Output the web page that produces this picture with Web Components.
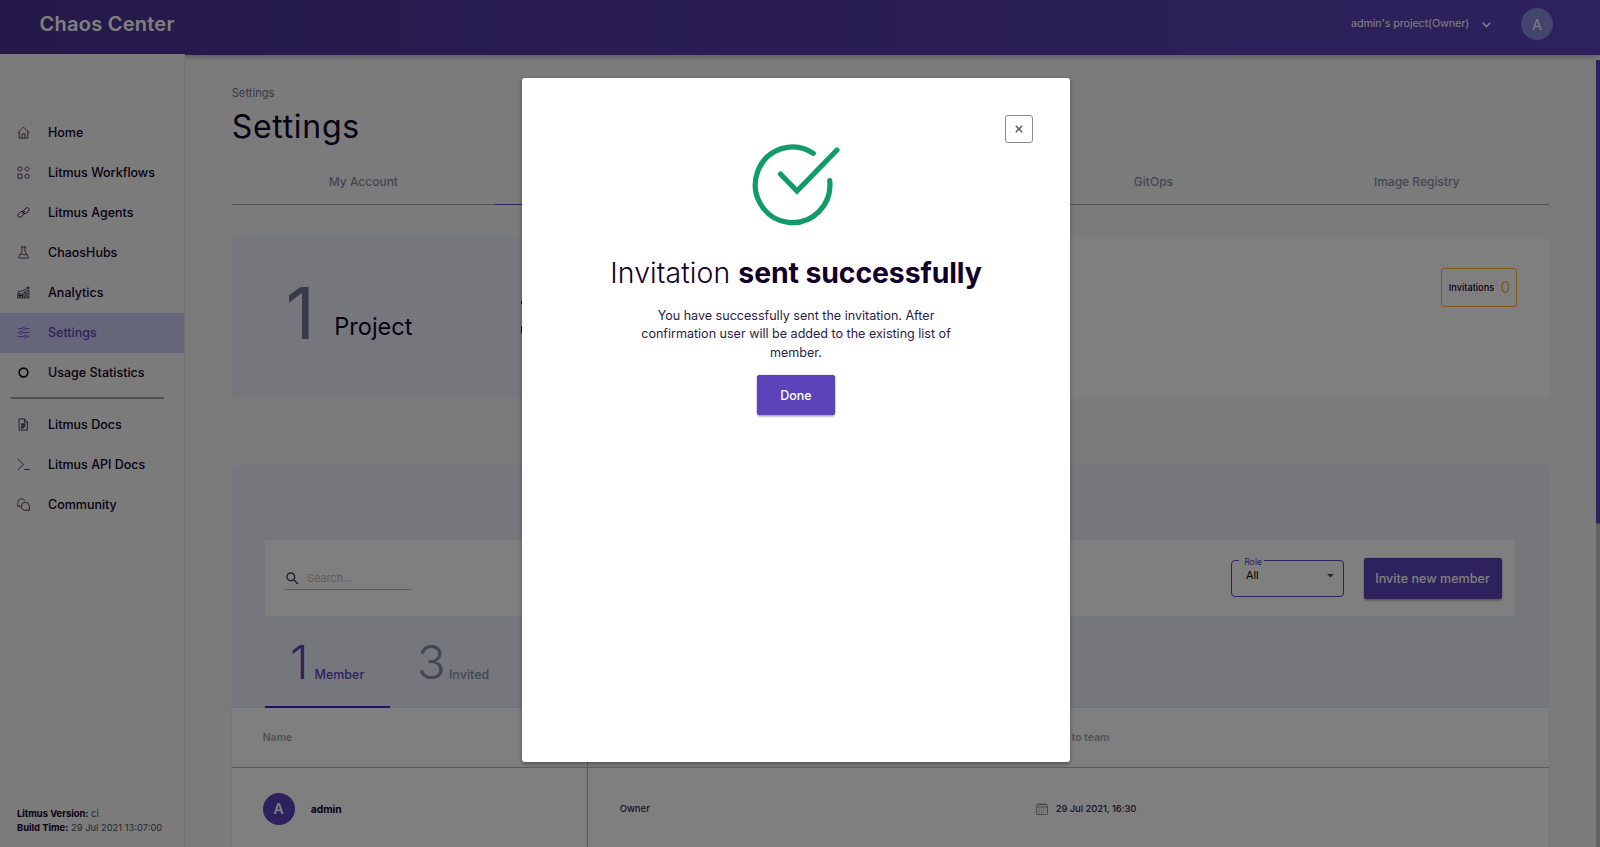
<!DOCTYPE html>
<html lang="en">
<head>
<meta charset="utf-8">
<title>Chaos Center</title>
<style>
html,body{margin:0;height:100%;overflow:hidden;background:#f7f7f7;font-family:Inter,"Liberation Sans",sans-serif;color:#110029}
</style>
</head>
<body>
<chaos-app></chaos-app>
<script>
const define = (name, html) => {
  const t = document.createElement('template');
  t.innerHTML = html;
  customElements.define(name, class extends HTMLElement {
    constructor() {
      super();
      this.attachShadow({ mode: 'open' }).append(t.content.cloneNode(true));
    }
  });
};

const icons = {
  home: '<path d="M.8 7.4 7 1.2 13.2 7.4M2.4 6v7.1h9.2V6M5.4 13V8.6h3.2V13"/>',
  workflows: '<circle cx="3.1" cy="3.1" r="2.3"/><path d="M10.9.4 13.5 3.1 10.9 5.8 8.2 3.1zM.9 8.7h4.4v4.5H.9z"/><circle cx="10.9" cy="11" r="2.3"/>',
  agents: '<g stroke-width=".9"><rect x="6.2" y="2.9" width="7.4" height="4.2" rx="2.1" transform="rotate(-42 9.9 5)"/><rect x=".4" y="6.9" width="7.4" height="4.2" rx="2.1" transform="rotate(-42 4.1 9)"/><path d="M5.3 8.2 8.7 5.6"/></g>',
  hubs: '<path d="M4 1h6M5.4 1v5L1.7 11.6q-.5 1.4.8 1.4h9q1.3 0 .8-1.4L8.6 6V1M3.6 9.2q1.7-1 3.4 0t3.4 0"/>',
  analytics: '<path d="M.8 13V7.6h1.9V13zM4.1 13V8.6H6V13zM7.5 13V6.4h1.9V13zM10.9 13V4.4h1.9V13zM.8 5.4 3.6 6 6.5 5 12.6 1.8M.8 10.2H6M10 1.4h2.9v1.8"/>',
  settings: '<path d="M.4 2.8h5.1M8.5 2.8h5.1M.4 7h2.3M5.7 7h7.9M.4 11.2h7.3M10.7 11.2h2.9"/><circle cx="7" cy="2.8" r="1.5"/><circle cx="4.2" cy="7" r="1.5"/><circle cx="9.2" cy="11.2" r="1.5"/>',
  usage: '<circle cx="7" cy="7" r="4.7" stroke="#000" stroke-width="1.7"/>',
  docs: '<path d="M2.2 1h6l3 3.2V13h-9zM8 1v3.4h3.2"/><path d="M4.2 6.7h5M4.2 8.7h5M4.2 10.6h3" stroke-width="1.3"/>',
  api: '<path d="M.6 1 7 7 .6 13M7.8 12.4h6"/>',
  community: '<path d="M4.8 8.9H.8V5A4.2 4.2 0 0 1 8.7 3"/><path d="M13.3 13.2H8.9a4.3 4.3 0 1 1 4.4-4.3z"/>'
};

define('app-avatar', `<style>
:host{display:flex;align-items:center;justify-content:center;width:32px;height:32px;border-radius:50%;background:var(--bg,#5b44ba);color:#fff;flex:none;font-size:14px;font-weight:var(--w,400)}
</style><slot></slot>`);

define('app-header', `<style>
:host{display:flex;align-items:center;height:55px;box-sizing:border-box;padding:0 47px 7px 39.5px;background:linear-gradient(90deg,#4a3394,#5b44ba);color:#fff;box-shadow:0 2px 5px rgba(0,0,0,.25);position:relative;z-index:1}
b{font-weight:600;font-size:20px;letter-spacing:.25px;flex:1}
span{font-size:10.8px;color:#fff;letter-spacing:-.11px;margin-top:-1.5px}
svg{margin:1px 30px 0 13px}
app-avatar{--bg:#858cdd}
</style><b>Chaos Center</b><span>admin's project(Owner)</span>
<svg width="9" height="6" viewBox="0 0 9 6" fill="none" stroke="#fff" stroke-width="1.6"><path d="M.8.8 4.5 4.5 8.2.8"/></svg><app-avatar>A</app-avatar>`);

customElements.define('nav-item', class extends HTMLElement {
  connectedCallback() {
    this.attachShadow({ mode: 'open' }).innerHTML = `<style>
:host{display:flex;align-items:center;height:40px;padding-left:16.5px;font-size:12.5px;font-weight:500}
:host([active]){background:#cacdf5;color:#5b44ba}
svg{margin-right:18.5px;color:#1c0732}
:host([active]) svg{color:#5b44ba}
</style><svg width="13" height="13" viewBox="0 0 14 14" fill="none" stroke="currentColor" stroke-width=".8">${icons[this.getAttribute('icon')]}</svg><slot></slot>`;
  }
});

define('app-sidebar', `<style>
:host{display:flex;flex-direction:column;width:184.5px;box-sizing:border-box;border-right:1px solid #e6e6e6;margin-top:-1px;padding-top:58.6px;background:#f7f7f7;position:relative;z-index:2}
hr{width:153px;margin:5px 0 5.6px 11px;height:1.6px;border:0;background:#a2a2a2}
nav-item[icon=usage]{height:39.4px}
footer{margin:auto 0 12.5px 17px;font-size:9.4px;line-height:14px;white-space:nowrap;color:#524b66}
footer b{color:#110029}
</style>
<nav-item icon="home">Home</nav-item><nav-item icon="workflows">Litmus Workflows</nav-item><nav-item icon="agents">Litmus Agents</nav-item><nav-item icon="hubs">ChaosHubs</nav-item><nav-item icon="analytics">Analytics</nav-item><nav-item icon="settings" active>Settings</nav-item><nav-item icon="usage">Usage Statistics</nav-item><hr><nav-item icon="docs">Litmus Docs</nav-item><nav-item icon="api">Litmus API Docs</nav-item><nav-item icon="community">Community</nav-item>
<footer><b>Litmus Version:</b> ci<br><b>Build Time:</b> 29 Jul 2021 13:07:00</footer>`);

define('settings-tabs', `<style>
:host{display:grid;grid-template-columns:repeat(5,1fr);height:50px;border-bottom:1.5px solid #a4a4a4;box-sizing:border-box;font-size:12px;font-weight:450;color:#868da6}
span{display:flex;align-items:center;justify-content:center;padding-top:2.5px;box-sizing:border-box;height:50px}
.on{border-bottom:1.5px solid #5b44ba;color:#5b44ba}
</style><span>My Account</span><span class="on">Team</span><span></span><span>GitOps</span><span>Image Registry</span>`);

define('project-card', `<style>
:host{display:flex;height:161px;border-radius:3px;overflow:hidden;background:#fff}
.l{width:420px;background:#ebeff9;display:flex;align-items:baseline;padding-left:54px;box-sizing:border-box}
.n{font-size:71.5px;color:#6f7691;line-height:153px;width:48.5px}
.p{font-size:23.6px;font-weight:400;color:#110029;width:186.5px;position:relative;top:-4px}
.o{align-self:flex-start;margin-top:64px;width:4px;height:32px;background:linear-gradient(#110029 3px,transparent 3px 25px,#110029 25px)}
.r{flex:1;display:flex;justify-content:flex-end;padding:31px 31.2px 0 0}
.inv{display:flex;align-items:center;justify-content:space-between;width:76px;height:39px;box-sizing:border-box;border:1px solid #f6b92b;border-radius:3px;padding:0 6px 0 6.5px;font-size:9.2px;font-weight:500}
.inv b{font-size:15.5px;font-weight:400;color:#f6b92b}
</style><div class="l"><span class="n">1</span><span class="p">Project</span><span class="o"></span></div><div class="r"><div class="inv">Invitations <b>0</b></div></div>`);

define('role-select', `<style>
:host{display:flex;align-items:center;justify-content:space-between;position:relative;width:113px;height:37px;box-sizing:border-box;border:1px solid #5b44ba;border-radius:4px;padding:0 9px 5px 14px;font-size:10.8px;color:#000}
label{position:absolute;left:7px;top:-5.5px;background:#fff;padding:0 2px 0 5.5px;font-size:8.5px;color:#5b44ba;line-height:14px}
</style><label>Role</label>All<svg width="7" height="4" viewBox="0 0 7 4"><path d="M0 0h7L3.5 3.6z" fill="#555"/></svg>`);

define('app-button', `<style>
:host{display:flex;align-items:center;justify-content:center;border-radius:3px;background:#5b44ba;color:#fff;font-weight:500;box-sizing:border-box;box-shadow:0 2px 2px rgba(0,0,0,.25),0 0 1px #3d1fa8}
</style><slot></slot>`);

define('member-toolbar', `<style>
:host{display:flex;align-items:center;height:76px;background:#fff;padding:0 13.7px 0 19.8px;box-sizing:border-box}
.s{display:flex;align-items:center;width:127px;height:26px;box-sizing:border-box;border-bottom:1.5px solid #b5b5b5;font-size:11px;letter-spacing:-.15px;color:#b9b9c0;margin-right:auto;margin-top:-2px;padding:3px 0 0 1.5px}
.s svg{margin-right:8.4px}
app-button{width:138px;height:41px;font-size:12.6px;margin-left:19.5px;margin-top:1px}
</style><div class="s"><svg width="12.5" height="12.5" viewBox="0 0 12 12" fill="none" stroke="#4a4560" stroke-width="1.4"><circle cx="4.6" cy="4.6" r="3.7"/><path d="m7.3 7.3 4.2 4.2"/></svg>Search...</div><role-select></role-select><app-button>Invite new member</app-button>`);

define('member-tabs', `<style>
:host{display:flex;height:92px}
div{display:flex;align-items:baseline;width:125.5px;height:92px;box-sizing:border-box;padding-left:25px;font-size:12.5px;font-weight:500;color:#868da6}
div+div{padding-left:26.5px}
.on{color:#5b44ba;border-bottom:2px solid #4a1fc0}
b{font-weight:300;font-size:47px;line-height:92px;margin-right:6px}
div+div b{margin-right:3.5px}
</style><div class="on"><b>1</b>Member</div><div><b>3</b>Invited</div>`);

define('member-table', `<style>
:host{display:grid;grid-template-columns:356px 416px 1fr;grid-template-rows:60px 90px;background:#fff;font-size:9.5px;font-weight:450;overflow:hidden;box-shadow:0 0 2px rgba(0,0,0,.12)}
div{display:flex;align-items:center;box-sizing:border-box;padding-left:32px;white-space:nowrap}
.h{color:#aaa9b4;font-weight:700;font-size:10.4px;border-bottom:1px solid #b7b7b7;padding-bottom:1px}
.f{border-right:1px solid #b7b7b7;padding-left:31px}
.row{padding-bottom:9px;color:#33284a}
.d{letter-spacing:-.1px}
app-avatar{margin-right:16px;--w:600}
.row b{color:#110029;font-weight:700;font-size:10.3px}
svg{margin-right:8px}
</style><div class="h f">Name</div><div class="h">Role</div><div class="h">Added to team</div>
<div class="row f"><app-avatar>A</app-avatar><b>admin</b></div><div class="row">Owner</div><div class="row d"><svg width="12" height="12" viewBox="0 0 12 12" fill="none" stroke="#777" stroke-width=".8"><rect x=".5" y="1.5" width="11" height="10" rx="1"/><path d="M.5 4h11M3 .2v2M5 .2v2M7 .2v2M9 .2v2"/><path d="M2.6 6.2h7M2.6 8h7M2.6 9.8h7" stroke-dasharray="1 1.4"/></svg>29 Jul 2021, 16:30</div>`);

define('settings-page', `<style>
:host{display:block;flex:1;min-width:0;padding:30px 51.5px 0 47.2px;box-sizing:border-box;height:792px;overflow:hidden}
.c{font-size:11.2px;line-height:16px;color:#6b7290}
h1{margin:5px 0 0;font-size:32px;line-height:41px;height:40px;font-weight:380;letter-spacing:.7px}
settings-tabs{margin:9px 0 0}
project-card{margin-top:32px}
.m{background:#ebeff9;margin-top:67px;padding:75px 33.3px 0;border-radius:3px 3px 0 0;height:243px;box-sizing:border-box}
</style><div class="c">Settings</div><h1>Settings</h1><settings-tabs></settings-tabs><project-card></project-card>
<div class="m"><member-toolbar></member-toolbar><member-tabs></member-tabs></div><member-table></member-table>`);

define('app-scrollbar', `<style>
:host{display:block;position:absolute;right:0;top:60px;bottom:0;width:4.5px;background:#c6c6c6}
i{display:block;height:464px;background:#5b44ba;border-radius:0 0 2px 2px}
</style><i></i>`);

define('invite-dialog', `<style>
:host{position:absolute;inset:0;background:rgba(0,0,0,.5);z-index:10;display:block}
section{position:absolute;left:522px;top:78px;width:548px;height:684px;background:#fff;border-radius:3px;box-shadow:0 2px 4px rgba(0,0,0,.35);box-sizing:border-box;display:flex;flex-direction:column;align-items:center}
.x{align-self:flex-end;margin:37px 37px 0 0;width:28px;height:28px;box-sizing:border-box;border:1px solid #8c8c8c;border-radius:3px;display:flex;align-items:center;justify-content:center}
.ok{margin:0 0 .5px}
h2{margin:27.5px 0 0;font-size:28.4px;font-weight:350;line-height:36px;white-space:nowrap;letter-spacing:.1px}
h2 b{font-weight:700;letter-spacing:-.1px}
p{margin:16px 0 0;width:330px;text-align:center;font-size:12.55px;line-height:18.3px;color:#2b1c45}
app-button{width:78px;height:40.5px;margin-top:13px;font-size:12.5px}
</style><section><div class="x"><svg width="8" height="8" viewBox="0 0 8 8" stroke="#666" stroke-width="1.6"><path d="m.8.8 6.4 6.4M7.2.8.8 7.2"/></svg></div>
<svg class="ok" width="88" height="84" viewBox="-.5 0 88 84" fill="none" stroke="#109b67" stroke-width="5.2" stroke-linecap="round"><path d="M60.8 10.3A37.3 37.8 0 1 0 77.2 37.5"/><path d="M28 31 44.5 48 84.5 7"/></svg>
<h2>Invitation <b>sent successfully</b></h2>
<p>You have successfully sent the invitation. After confirmation user will be added to the existing list of member.</p>
<app-button>Done</app-button></section>`);

define('chaos-app', `<style>
:host{display:block;position:relative;width:1600px;height:847px;overflow:hidden;background:#f7f7f7}
main{display:flex;height:792px}
</style><app-header></app-header><main><app-sidebar></app-sidebar><settings-page></settings-page></main><app-scrollbar></app-scrollbar><invite-dialog></invite-dialog>`);
</script>
</body>
</html>
